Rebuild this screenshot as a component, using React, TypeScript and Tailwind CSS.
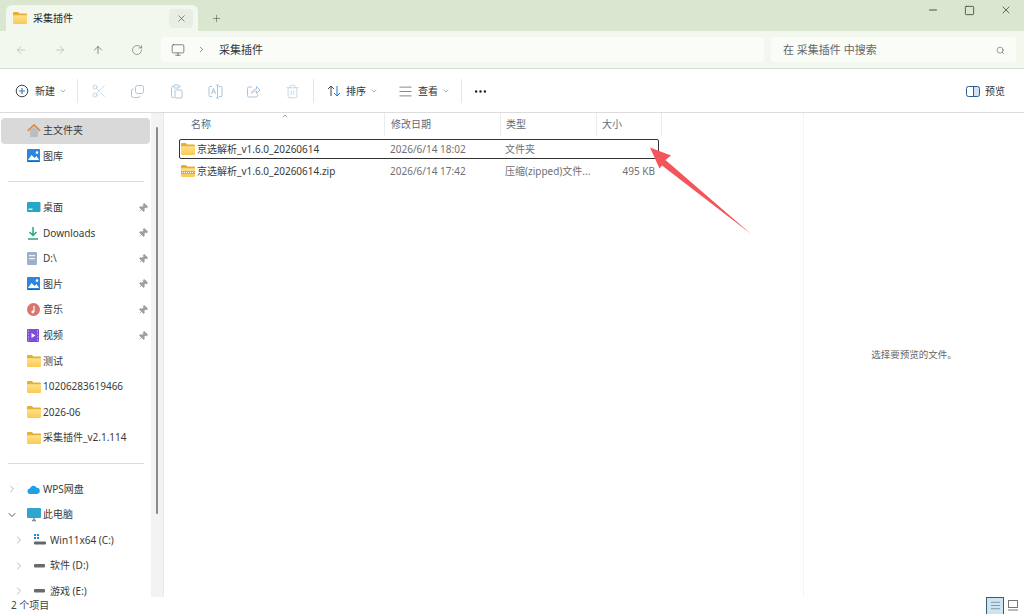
import { ReactNode } from "react";
import {
  ArrowLeft,
  ArrowRight,
  ArrowUp,
  ChevronDown,
  ChevronRight,
  ChevronUp,
  Ellipsis,
  Minus,
  Monitor,
  Pin,
  Plus,
  RotateCw,
  Scissors,
  Search,
  Square,
  Trash2,
  X,
  AlignJustify,
} from "lucide-react";

const font = { fontFamily: '"Noto Sans", "Noto Sans CJK SC", sans-serif' };

function FolderIcon({ size = 14, zip = false }: { size?: number; zip?: boolean }) {
  return (
    <svg width={size} height={size * 0.86} viewBox="0 0 14 12" className="shrink-0">
      <defs>
        <linearGradient id="folderBody" x1="0" y1="0" x2="0" y2="1">
          <stop offset="0" stopColor="#fde28f" />
          <stop offset="1" stopColor="#fbc94f" />
        </linearGradient>
      </defs>
      <path d="M0 1.2C0 .5.5 0 1.2 0h3.6l1.600 1.600h6.400c.7 0 1.200.5 1.200 1.200V5H0z" fill="#e8ad35" />
      <path d="M0 3.200h14v7.600c0 .7-.5 1.200-1.200 1.200H1.200C.5 12 0 11.500 0 10.800z" fill="url(#folderBody)" />
      {zip && <path d="M0 6h14v3H0z" fill="#b9b08a" />}
      {zip && <path d="M1 7h1v1H1zm2 0h1v1H3zm2 0h1v1H5zm2 0h1v1H7zm2 0h1v1H9zm2 0h1v1h-1z" fill="#fff" />}
    </svg>
  );
}

function Picture() {
  return (
    <svg width="14" height="14" viewBox="0 0 14 14">
      <rect width="13" height="13" rx="1" fill="#2c86dc" />
      <path d="M1 11l3.500-5 3 3 2-2 2.500 4z" fill="#fff" />
      <circle cx="10" cy="3.600" r="1.300" fill="#fff" />
      <path d="M.5 12.500h12" stroke="#1b5fae" />
    </svg>
  );
}

function NavIcon({ kind }: { kind: string }) {
  switch (kind) {
    case "home":
      return (
        <svg width="14" height="13" viewBox="0 0 14 13">
          <path d="M3 6.500L7 3l4 3.500V13H3z" fill="#b9bec2" />
          <path d="M.8 6.800L7 1l6.200 5.800" fill="none" stroke="#dc8a42" strokeWidth="1.700" />
        </svg>
      );
    case "gallery":
      return <Picture />;
    case "desktop":
      return (
        <svg width="14" height="11" viewBox="0 0 14 11">
          <rect width="13.500" height="10" rx="1" fill="#26a6c9" />
          <rect x="1.500" y="6.500" width="4" height="1.400" fill="#d5f1f7" />
        </svg>
      );
    case "download":
      return (
        <svg width="12" height="13" viewBox="0 0 12 13">
          <path d="M6 0v8M2.500 5L6 8.500 9.500 5" fill="none" stroke="#27a77e" strokeWidth="1.500" />
          <path d="M1 12h10" stroke="#27a77e" strokeWidth="1.500" />
        </svg>
      );
    case "disk":
      return (
        <svg width="11" height="14" viewBox="0 0 11 14">
          <rect width="10" height="13" rx="1" fill="#9fb1ca" />
          <rect x="2" y="3" width="6" height="1.200" fill="#eef2f7" />
          <rect x="2" y="6" width="6" height="1.200" fill="#eef2f7" />
        </svg>
      );
    case "music":
      return (
        <svg width="14" height="14" viewBox="0 0 14 14">
          <circle cx="6.500" cy="6.500" r="6.500" fill="#d9756c" />
          <path d="M7 3v6" stroke="#fff" strokeWidth="1.200" />
          <circle cx="5.800" cy="9" r="1.400" fill="#fff" />
        </svg>
      );
    case "video":
      return (
        <svg width="13" height="14" viewBox="0 0 13 14">
          <rect width="12" height="13" rx="1" fill="#7d4ed8" />
          <path d="M4.500 4l4 2.500-4 2.500z" fill="#fff" />
          <path d="M1 2h1M1 5h1M1 8h1M1 11h1M10 2h1M10 5h1M10 8h1M10 11h1" stroke="#d9c8f7" />
        </svg>
      );
    case "cloud":
      return (
        <svg width="13" height="9" viewBox="0 0 14 10">
          <path d="M3.500 10a3 3 0 0 1-.5-6 4 4 0 0 1 7.500-1 3.500 3.500 0 0 1 0 7z" fill="#1ea0e6" />
        </svg>
      );
    case "pc":
      return (
        <svg width="15" height="14" viewBox="0 0 15 14">
          <rect width="14" height="10" rx="1" fill="#2fa5cf" />
          <path d="M5 12.500h4" stroke="#7b8d98" strokeWidth="1.500" />
          <path d="M7 10v2" stroke="#7b8d98" strokeWidth="1.500" />
        </svg>
      );
    case "win":
      return (
        <svg width="12" height="12" viewBox="0 0 12 12">
          <path d="M0 0h2v2H0zm3 0h2v2H3zM0 3h2v2H0zm3 0h2v2H3z" fill="#1d8fd8" />
          <rect y="7.500" width="12" height="3" rx="1" fill="#62676b" />
        </svg>
      );
    case "drive":
      return (
        <svg width="12" height="4" viewBox="0 0 12 4">
          <rect width="11" height="3.500" rx="1" fill="#666b6f" />
        </svg>
      );
    default:
      return <FolderIcon />;
  }
}

function NavRow({
  icon,
  label,
  pinned,
  active,
  caret,
  indent,
}: {
  icon: string;
  label: string;
  pinned?: boolean;
  active?: boolean;
  caret?: "right" | "down";
  indent?: boolean;
}) {
  return (
    <div className={`mr-[1px] flex h-[25.600px] shrink-0 items-center rounded-sm ${active ? "bg-[#d9d9d9]" : ""}`}>
      <div className={`flex shrink-0 text-[#888] ${indent ? "w-[32px] pl-[12px]" : "w-[25px] pl-[5px]"}`}>
        {caret === "right" && <ChevronRight size={12} strokeWidth={1.200} />}
        {caret === "down" && <ChevronDown size={12} strokeWidth={1.800} className="text-[#444]" />}
      </div>
      <div className="flex w-[17px] shrink-0 items-center pl-[1px]">
        <NavIcon kind={icon} />
      </div>
      <span className="whitespace-nowrap text-[10px] text-[#3a3a3a]">{label}</span>
      {pinned && <Pin size={10} strokeWidth={2} className="ml-auto mr-[2px] rotate-45 fill-[#a0a0a0] text-[#a0a0a0]" />}
    </div>
  );
}

function Separator() {
  return (
    <div className="flex h-[25.600px] shrink-0 items-center px-[7px]">
      <div className="h-px w-full bg-[#dcdcdc]" />
    </div>
  );
}

function Sidebar() {
  return (
    <aside className="flex w-[164px] shrink-0 border-r border-[#e9e9e9]">
      <div className="flex w-[151px] flex-col pl-[1px] pt-[5px]">
        <NavRow icon="home" label="主文件夹" active />
        <NavRow icon="gallery" label="图库" />
        <Separator />
        <NavRow icon="desktop" label="桌面" pinned />
        <NavRow icon="download" label="Downloads" pinned />
        <NavRow icon="disk" label="D:\" pinned />
        <NavRow icon="gallery" label="图片" pinned />
        <NavRow icon="music" label="音乐" pinned />
        <NavRow icon="video" label="视频" pinned />
        <NavRow icon="folder" label="测试" />
        <NavRow icon="folder" label="10206283619466" />
        <NavRow icon="folder" label="2026-06" />
        <NavRow icon="folder" label="采集插件_v2.1.114" />
        <Separator />
        <NavRow icon="cloud" label="WPS网盘" caret="right" />
        <NavRow icon="pc" label="此电脑" caret="down" />
        <NavRow icon="win" label="Win11x64 (C:)" caret="right" indent />
        <NavRow icon="drive" label="软件 (D:)" caret="right" indent />
        <NavRow icon="drive" label="游戏 (E:)" caret="right" indent />
      </div>
      <div className="w-[12px] bg-[#f3f3f3] pl-[5px] pt-[14px]">
        <div className="h-[387px] w-[2px] rounded-full bg-[#8a8a8a]" />
      </div>
    </aside>
  );
}

function ToolSep() {
  return <div className="h-[24px] w-px shrink-0 bg-[#e6e6e6]" />;
}

function ToolIcon({ children }: { children: ReactNode }) {
  return (
    <svg width="15" height="15" viewBox="0 0 15 15" fill="none" stroke="#aac6de" strokeWidth="1">
      {children}
    </svg>
  );
}

function Toolbar() {
  const off = "#aac6de";
  return (
    <div className="flex h-[44px] shrink-0 items-center border-b border-[#dcdcdc] bg-white pl-[15px] pr-[19px] pt-[1px] text-[10px] text-[#333]">
      <div className="flex w-[62px] shrink-0 items-center">
        <svg width="14" height="14" viewBox="0 0 14 14" fill="none" className="mr-[6px]">
          <circle cx="7" cy="7" r="5.800" stroke="#444" />
          <path d="M7 4v6M4 7h6" stroke="#2a78c8" strokeWidth="1.100" />
        </svg>
        新建
        <ChevronDown size={8} className="ml-[4px] text-[#888]" />
      </div>
      <ToolSep />
      <div className="flex h-full w-[235px] shrink-0 items-center justify-around px-[1px]">
        <Scissors size={16} strokeWidth={1} color={off} />
        <ToolIcon>
          <rect x="5.500" y="1.500" width="8" height="8" rx="2" />
          <path d="M3.500 5H3a2 2 0 0 0-1.500 2v4.500A2 2 0 0 0 3.500 13.500H8a2 2 0 0 0 2-1.500" />
        </ToolIcon>
        <ToolIcon>
          <path d="M5 2.500H3.500a1 1 0 0 0-1 1v9a1 1 0 0 0 1 1H5M10 2.500h1.500" />
          <rect x="5" y="1" width="5" height="3" rx=".5" />
          <rect x="6" y="6" width="7" height="8" rx="1" />
        </ToolIcon>
        <ToolIcon>
          <path d="M4 2.500H2a1 1 0 0 0-1 1v8a1 1 0 0 0 1 1h2M11 2.500h2a1 1 0 0 1 1 1v8a1 1 0 0 1-1 1h-2" />
          <path d="M9.500 1v13M8 1h3M8 14h3" />
          <path d="M3.500 10l2-6 2 6M4.200 8h2.600" />
        </ToolIcon>
        <ToolIcon>
          <path d="M6 3H3a1.500 1.500 0 0 0-1.500 1.500v7A1.500 1.500 0 0 0 3 13h7a1.500 1.500 0 0 0 1.500-1.500V10" />
          <path d="M5.500 9.500C6 6.500 8 5 10.500 5V2.500L14 6l-3.500 3.500V7C8.500 7 6.500 8 5.500 9.500z" />
        </ToolIcon>
        <Trash2 size={15} strokeWidth={1} color={off} />
      </div>
      <ToolSep />
      <div className="ml-[13px] flex w-[71px] shrink-0 items-center">
        <svg width="14" height="14" viewBox="0 0 14 14" fill="none" className="mr-[5px]">
          <path d="M4 12V2M1 5l3-3 3 3" stroke="#444" />
          <path d="M10 2v10M7 9l3 3 3-3" stroke="#2a78c8" />
        </svg>
        排序
        <ChevronDown size={8} className="ml-[4px] text-[#888]" />
      </div>
      <div className="flex w-[63px] shrink-0 items-center">
        <AlignJustify size={15} strokeWidth={1} className="mr-[5px] text-[#444]" />
        查看
        <ChevronDown size={8} className="ml-[4px] text-[#888]" />
      </div>
      <ToolSep />
      <Ellipsis size={15} strokeWidth={2} className="ml-[11px] text-[#222]" />
      <div className="ml-auto flex items-center">
        <svg width="14" height="11" viewBox="0 0 14 11" fill="none" className="mr-[5px]">
          <rect x="7.500" y=".5" width="6" height="10" rx="1.500" fill="#cfe3f5" />
          <rect x=".5" y=".5" width="13" height="10" rx="2" stroke="#2b5d8f" />
          <path d="M7.500 1v9" stroke="#2b5d8f" />
        </svg>
        预览
      </div>
    </div>
  );
}

function Header() {
  const cols = [
    { label: "名称", cls: "w-[206px] pl-[12px]" },
    { label: "修改日期", cls: "w-[116px] pl-[6px]" },
    { label: "类型", cls: "w-[96px] pl-[5px]" },
    { label: "大小", cls: "w-[65px] pl-[5px]" },
  ];
  return (
    <div className="relative flex h-[23px] shrink-0 pl-[15px] text-[10px] text-[#5d6b7d]">
      {cols.map((c) => (
        <div key={c.label} className={`flex h-full shrink-0 items-center border-r border-[#ececec] ${c.cls}`}>
          {c.label}
        </div>
      ))}
      <ChevronUp size={8} className="absolute left-[117px] top-[-1px] text-[#777]" />
    </div>
  );
}

function FileRow({
  name,
  date,
  type,
  size,
  zip,
  focused,
}: {
  name: string;
  date: string;
  type: string;
  size?: string;
  zip?: boolean;
  focused?: boolean;
}) {
  return (
    <div
      className={`ml-[15px] flex h-[20px] w-[480px] items-center rounded-[2px] pt-[1px] text-[10px] text-[#707070] ${
        focused ? "border border-[#333]" : "border border-transparent"
      }`}
    >
      <div className="flex w-[205px] shrink-0 items-center pl-[1px]">
        <FolderIcon zip={zip} />
        <span className="ml-[2px] text-[#3a3a3a]">{name}</span>
      </div>
      <div className="w-[115px] shrink-0 pl-[5px]">{date}</div>
      <div className="w-[93px] shrink-0 whitespace-nowrap pl-[5px]">{type}</div>
      <div className="flex-1 pr-[3px] text-right">{size}</div>
    </div>
  );
}

export default function App() {
  return (
    <div style={font} className="relative flex h-[614px] w-[1024px] flex-col overflow-hidden bg-white">
      {/* title bar with the tab */}
      <div className="flex h-[31px] shrink-0 items-end bg-[#dae6cf] pl-[6px]">
        <div className="flex h-[26px] w-[192px] items-center rounded-t-[6px] bg-[#f3f8ef] pl-[7px]">
          <FolderIcon />
          <span className="ml-[6px] text-[10px] text-[#222]">采集插件</span>
          <div className="ml-auto mr-[5px] flex h-[19px] w-[24px] items-center justify-center rounded bg-[#e9eee5]">
            <X size={11} strokeWidth={1.200} className="text-[#333]" />
          </div>
        </div>
        <div className="ml-[13px] flex h-[26px] items-center">
          <Plus size={11} strokeWidth={1} className="text-[#333]" />
        </div>
        <div className="ml-auto flex h-full items-start pt-[4px] text-[#222]">
          <div className="flex h-[12px] w-[36px] items-center justify-center">
            <Minus size={12} strokeWidth={1.500} />
          </div>
          <div className="flex h-[12px] w-[37px] items-center justify-center">
            <Square size={11} strokeWidth={1.500} />
          </div>
          <div className="flex h-[12px] w-[36px] items-center justify-center">
            <X size={12} strokeWidth={1.300} />
          </div>
        </div>
      </div>

      {/* navigation row */}
      <div className="flex h-[38px] shrink-0 items-center border-b border-[#d9dfd4] bg-[#f3f8ef] pl-[15px] pr-[8px]">
        <ArrowLeft size={12} strokeWidth={1} className="text-[#9a9f97]" />
        <ArrowRight size={12} strokeWidth={1} className="ml-[26.500px] text-[#9a9f97]" />
        <ArrowUp size={12} strokeWidth={1} className="ml-[26.500px] text-[#222]" />
        <RotateCw size={12} strokeWidth={1} className="ml-[26.500px] text-[#444]" />
        <div className="ml-[18.500px] flex h-[25px] w-[603px] items-center rounded-[4px] bg-[#fafcf8] pl-[10px]">
          <Monitor size={14} strokeWidth={1} className="text-[#333]" />
          <ChevronRight size={9} strokeWidth={1.500} className="ml-[12px] text-[#333]" />
          <span className="ml-[13px] pt-[2px] text-[11px] text-[#333]">采集插件</span>
        </div>
        <div className="ml-[7px] flex h-[25px] flex-1 items-center justify-between rounded-[4px] bg-[#fafcf8] pl-[12px] pr-[11px] pt-[2px] text-[11px] text-[#666]">
          在 采集插件 中搜索
          <Search size={9} strokeWidth={1.500} className="text-[#555]" />
        </div>
      </div>

      <Toolbar />

      <div className="flex min-h-0 flex-1">
        <Sidebar />
        <main className="flex w-[639px] shrink-0 flex-col">
          <Header />
          <div className="flex flex-col gap-[2px] pt-[3px]">
            <FileRow name="京选解析_v1.6.0_20260614" date="2026/6/14 18:02" type="文件夹" focused />
            <FileRow
              name="京选解析_v1.6.0_20260614.zip"
              date="2026/6/14 17:42"
              type="压缩(zipped)文件..."
              size="495 KB"
              zip
            />
          </div>
        </main>
        <section className="flex flex-1 items-center justify-center border-l border-[#f4f4f4] text-[9.500px] text-[#666]">
          选择要预览的文件。
        </section>
      </div>

      {/* status bar */}
      <div className="relative flex h-[17px] shrink-0 items-center bg-white pl-[11px] pr-[5px] text-[10px] text-[#444]">
        2 个项目
        <div className="ml-auto flex h-[18px] w-[18px] items-center justify-center border border-[#3f5a6e] bg-[#cde4f3]">
          <AlignJustify size={11} strokeWidth={1.200} className="text-[#555]" />
        </div>
        <svg width="11" height="11" viewBox="0 0 11 11" className="ml-[4px]">
          <rect x=".5" y=".5" width="9" height="7" fill="none" stroke="#777" />
          <path d="M0 10h10" stroke="#777" />
        </svg>
      </div>

      {/* red annotation arrow */}
      <svg width="1024" height="614" className="pointer-events-none absolute left-0 top-0">
        <polygon points="650,147.500 671,155.500 665.500,160 751,234 662,165.500 659.500,168.500" fill="#f4555a" />
      </svg>
    </div>
  );
}
